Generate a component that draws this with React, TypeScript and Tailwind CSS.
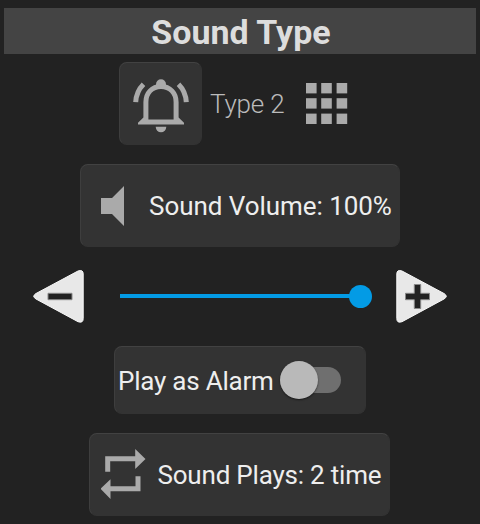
import type { ReactNode } from "react";

function Panel({ className, children }: { className: string; children: ReactNode }) {
  return (
    <div
      className={`flex items-center rounded-lg border border-r-[#333] border-b-[#333] border-t-[#424242] border-l-[#3e3e3e] bg-[#333] ${className}`}
    >
      {children}
    </div>
  );
}

function BellIcon() {
  return (
    <svg width="56" height="58" viewBox="0 0 56 58" fill="none" className="shrink-0">
      <path
        d="M12.900 45V27C12.900 18 19 11.500 28 11.500S43.100 18 43.100 27V45"
        stroke="#aaa"
        strokeWidth="5"
      />
      <path d="M10.400 42.500L15 44.500H41L45.600 42.500L51 47.800V49.500H5V47.800Z" fill="#aaa" />
      <path d="M23 12.500V9.200A5 5 0 0 1 33 9.200V12.500Z" fill="#aaa" />
      <path d="M22.700 51.800H33.300A5.300 5.500 0 0 1 22.700 51.800Z" fill="#aaa" />
      <path d="M10.500 9.200Q3.200 16.500 2.700 27.200M45.500 9.200Q52.800 16.500 53.300 27.200" stroke="#aaa" strokeWidth="5" />
    </svg>
  );
}

function GridIcon() {
  const offsets = [0, 15.2, 30.6];
  return (
    <svg width="42" height="41" viewBox="0 0 42 41" className="shrink-0" fill="#aaa">
      {offsets.map((y) =>
        offsets.map((x) => <rect key={`${x}-${y}`} x={x} y={y} width="10.6" height="10.4" />)
      )}
    </svg>
  );
}

function SpeakerIcon() {
  return (
    <svg width="24" height="40" viewBox="0 0 24 40" className="shrink-0">
      <path d="M0 12H11L23 0V40L11 28H0Z" fill="#aaa" />
    </svg>
  );
}

function RepeatIcon() {
  return (
    <svg width="46" height="50" viewBox="0 0 46 50" className="mb-px shrink-0">
      <path
        d="M4.200 7.300H34.200V0L44.500 10L34.200 20V12.300H9.200V22.700H4.200ZM39.500 27.300V42.300H9.500V50L-.500 39.700L9.500 30.300V37.300H34.500V27.300Z"
        fill="#aaa"
      />
    </svg>
  );
}

function StepButton({ kind }: { kind: "minus" | "plus" }) {
  return (
    <button type="button" aria-label={kind}>
      <svg width="52" height="54" viewBox="0 0 52 54" className="block">
        <path
          d={
            kind === "minus"
              ? "M46 2Q51.200 .2 51.200 5V49.500Q51.200 54.500 46 52.700L4 30Q-.5 27.300 4 24.500Z"
              : "M6 2Q.8 .2 .8 5V49.500Q.8 54.500 6 52.700L48 30Q52.500 27.300 48 24.500Z"
          }
          fill="#e8e8e8"
          stroke="#f8f8f8"
          strokeWidth="1"
        />
        {kind === "minus" ? (
          <path d="M16 24.300H40V30.700H16Z" fill="#222" stroke="#888" strokeWidth="1" />
        ) : (
          <path
            d="M18.300 15.500H24.700V24.300H33.500V30.700H24.700V39.500H18.300V30.700H9.500V24.300H18.300Z"
            fill="#222"
            stroke="#888"
            strokeWidth="1"
          />
        )}
      </svg>
    </button>
  );
}

export default function App() {
  return (
    <div className="flex h-[524px] w-[480px] flex-col items-center bg-[#222] pt-2 font-[Roboto,sans-serif] text-[26px] leading-8 whitespace-nowrap text-[#eee]">
      <h1 className="flex h-[46px] w-[472px] items-center justify-center bg-[#444] pt-0.5 pl-0.5 text-[34px] font-bold text-[#ddd]">
        Sound Type
      </h1>

      <div className="mt-2 flex h-[83px] w-[480px] items-center pl-[119px]">
        <Panel className="size-[83px] pl-[13px]">
          <BellIcon />
        </Panel>
        <span className="ml-2 w-[96px] font-light tracking-[-0.2px] text-[#bbb]">Type 2</span>
        <GridIcon />
      </div>

      <Panel className="mt-[19px] h-[83px] w-[320px] pl-5">
        <SpeakerIcon />
        <span className="ml-6 tracking-[-0.05px]">Sound Volume: 100%</span>
      </Panel>

      <div className="mt-[22px] flex h-[54px] w-[416px] items-center justify-between">
        <StepButton kind="minus" />
        <div className="ml-3 flex w-[252px] items-center">
          <div className="h-1 w-[230px] bg-[#039be5]" />
          <div className="-ml-px size-[23px] rounded-full bg-[#039be5]" />
        </div>
        <StepButton kind="plus" />
      </div>

      <Panel className="mt-[23px] h-[68px] w-[252px] pl-[3px]">
        <span className="w-[162px] pt-0.5 tracking-[-0.22px]">Play as Alarm</span>
        <div className="flex h-[26px] w-[61px] items-center rounded-full bg-[#6f6f6f]">
          <div className="size-[38px] shrink-0 rounded-full bg-[#b9b9b9] shadow-[0_1px_2px_#0008]" />
        </div>
      </Panel>

      <Panel className="mt-[19px] mr-0.5 h-[83px] w-[301px] pl-[11px]">
        <RepeatIcon />
        <span className="ml-[11px] tracking-[-0.2px]">Sound Plays: 2 time</span>
      </Panel>
    </div>
  );
}
